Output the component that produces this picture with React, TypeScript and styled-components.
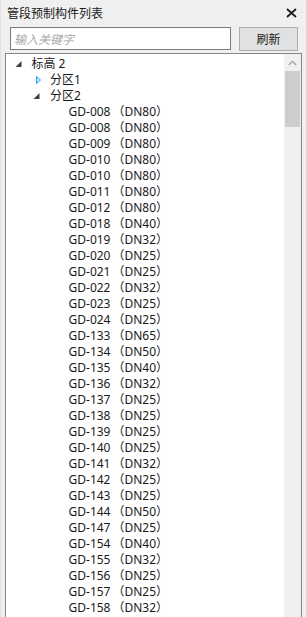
import React from 'react';
import styled, { createGlobalStyle } from 'styled-components';

const GlobalStyle = createGlobalStyle`
  html, body {
    margin: 0;
    padding: 0;
    background: #f0f0f0;
  }
  body {
    font-family: 'Microsoft YaHei', 'Noto Sans CJK SC', sans-serif;
    font-size: 12px;
    color: #1a1a1a;
  }
`;

const Panel = styled.div`
  width: 307px;
  height: 617px;
  display: flex;
  flex-direction: column;
  overflow: hidden;
  box-sizing: border-box;
  border-left: 1px solid #e2e2e2;
  border-right: 1px solid #dcdcdc;
`;

const TitleBar = styled.div`
  height: 25px;
  display: flex;
  align-items: center;
  justify-content: space-between;
  padding: 0 9px 0 6px;
  font-size: 12px;
  color: #1a1a1a;
`;

const CloseButton = styled.span`
  display: flex;
  width: 12px;
  height: 12px;
  align-items: center;
  justify-content: center;
`;

const SearchBar = styled.div`
  display: flex;
  align-items: center;
  gap: 8px;
  padding: 1px 8px 0 9px;
  height: 25px;
`;

const SearchInput = styled.input`
  width: 221px;
  height: 23px;
  box-sizing: border-box;
  border: 1px solid #7a7a7a;
  background: #fff;
  padding: 0 3px;
  font-family: inherit;
  font-size: 12px;
  outline: none;

  &::placeholder {
    color: #a6a6a6;
    font-style: italic;
  }
`;

const RefreshButton = styled.button`
  width: 59px;
  height: 24px;
  box-sizing: border-box;
  border: 1px solid #adadad;
  background: #e1e1e1;
  font-family: inherit;
  font-size: 12px;
  color: #1a1a1a;
  padding: 0;
`;

const TreeBox = styled.div`
  flex: 1;
  display: flex;
  margin: 2px 4px 0 4px;
  border: 1px solid #828790;
  border-bottom: none;
  background: #fff;
  min-height: 0;
`;

const TreeList = styled.div`
  flex: 1;
  padding-top: 2px;
  overflow: hidden;
  font-family: 'Noto Sans', 'Noto Sans CJK SC', sans-serif;
`;

const Row = styled.div<{ level: number }>`
  height: 16px;
  line-height: 16px;
  display: flex;
  align-items: center;
  padding-left: ${(p) => 5.5 + p.level * 18.5}px;
  white-space: nowrap;
  color: #1a1a1a;
`;

const Toggle = styled.span`
  width: 20px;
  height: 16px;
  display: flex;
  align-items: center;
  flex-shrink: 0;
`;

const Label = styled.span`
  font-size: 12px;
`;

const Size = styled.span`
  margin-left: 2px;
`;

const ScrollBar = styled.div`
  width: 17px;
  background: #f0f0f0;
  display: flex;
  flex-direction: column;
`;

const ScrollArrow = styled.div`
  height: 17px;
  display: flex;
  align-items: center;
  justify-content: center;
`;

const ScrollThumb = styled.div`
  height: 56px;
  margin: 0 1px;
  background: #cdcdcd;
`;

const ExpandedIcon = () => (
  <svg width="20" height="16" viewBox="0 0 20 16">
    <path d="M9.5 5 L9.5 11 L3.5 11 Z" fill="#404040" />
  </svg>
);

const CollapsedIcon = () => (
  <svg width="20" height="16" viewBox="0 0 20 16">
    <path d="M6.5 4.5 L10.5 8 L6.5 11.5 Z" fill="#c8ecfb" stroke="#1ca3ec" strokeWidth="1" />
  </svg>
);

type Item = { code: string; dn: number };

const items: Item[] = [
  { code: '008', dn: 80 },
  { code: '008', dn: 80 },
  { code: '009', dn: 80 },
  { code: '010', dn: 80 },
  { code: '010', dn: 80 },
  { code: '011', dn: 80 },
  { code: '012', dn: 80 },
  { code: '018', dn: 40 },
  { code: '019', dn: 32 },
  { code: '020', dn: 25 },
  { code: '021', dn: 25 },
  { code: '022', dn: 32 },
  { code: '023', dn: 25 },
  { code: '024', dn: 25 },
  { code: '133', dn: 65 },
  { code: '134', dn: 50 },
  { code: '135', dn: 40 },
  { code: '136', dn: 32 },
  { code: '137', dn: 25 },
  { code: '138', dn: 25 },
  { code: '139', dn: 25 },
  { code: '140', dn: 25 },
  { code: '141', dn: 32 },
  { code: '142', dn: 25 },
  { code: '143', dn: 25 },
  { code: '144', dn: 50 },
  { code: '147', dn: 25 },
  { code: '154', dn: 40 },
  { code: '155', dn: 32 },
  { code: '156', dn: 25 },
  { code: '157', dn: 25 },
  { code: '158', dn: 32 },
];

const App: React.FC = () => {
  return (
    <>
      <GlobalStyle />
      <Panel>
        <TitleBar>
          <span>管段预制构件列表</span>
          <CloseButton>
            <svg width="11" height="10" viewBox="0 0 11 10">
              <path d="M1 1 L10 9 M10 1 L1 9" stroke="#1a1a1a" strokeWidth="1.7" />
            </svg>
          </CloseButton>
        </TitleBar>
        <SearchBar>
          <SearchInput placeholder="输入关键字" />
          <RefreshButton>刷新</RefreshButton>
        </SearchBar>
        <TreeBox>
          <TreeList>
            <Row level={0}>
              <Toggle>
                <ExpandedIcon />
              </Toggle>
              <Label>标高 2</Label>
            </Row>
            <Row level={1}>
              <Toggle>
                <CollapsedIcon />
              </Toggle>
              <Label>分区1</Label>
            </Row>
            <Row level={1}>
              <Toggle>
                <ExpandedIcon />
              </Toggle>
              <Label>分区2</Label>
            </Row>
            {items.map((it, i) => (
              <Row level={2} key={i}>
                <Toggle />
                <Label>
                  GD-{it.code}
                  <Size>（DN{it.dn}）</Size>
                </Label>
              </Row>
            ))}
          </TreeList>
          <ScrollBar>
            <ScrollArrow>
              <svg width="9" height="6" viewBox="0 0 9 6">
                <path d="M0.8 5 L4.5 1.3 L8.2 5" fill="none" stroke="#a3a3a3" strokeWidth="1.3" />
              </svg>
            </ScrollArrow>
            <ScrollThumb />
          </ScrollBar>
        </TreeBox>
      </Panel>
    </>
  );
};

export default App;
